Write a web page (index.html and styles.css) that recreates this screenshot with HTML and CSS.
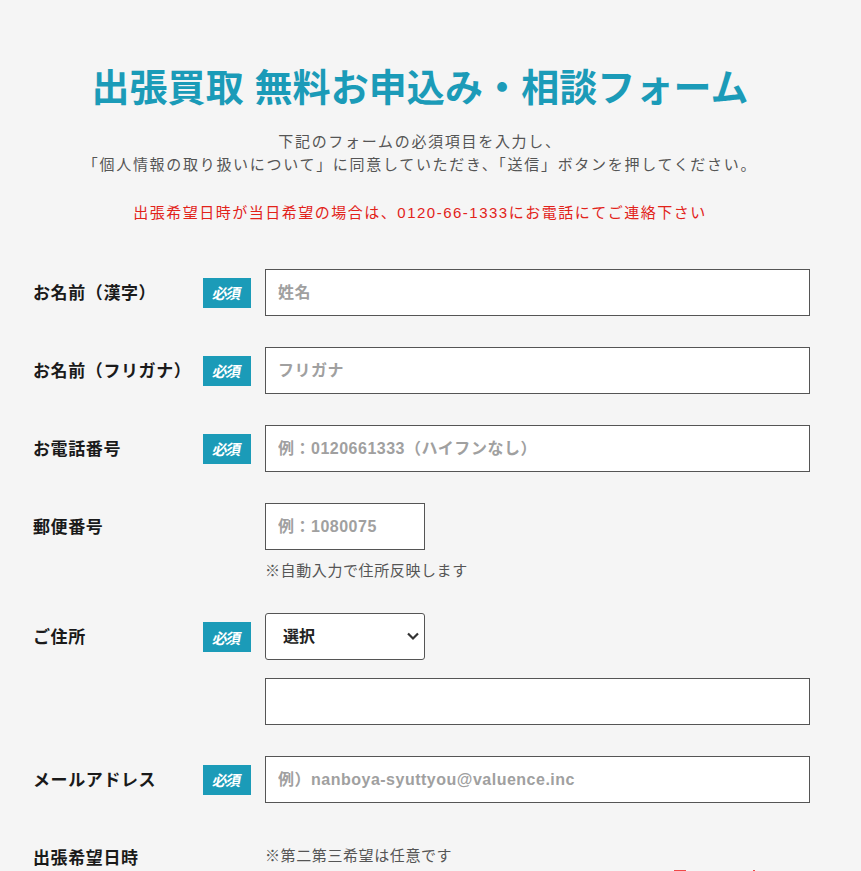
FILE: index.html
```html
<!DOCTYPE html>
<html lang="ja">
<head>
<meta charset="utf-8">
<title>出張買取 無料お申込み・相談フォーム</title>
<link rel="stylesheet" href="styles.css">
</head>
<body>
<div class="page">
  <h1 class="title">出張買取 無料お申込み・相談フォーム</h1>
  <p class="lead">下記のフォームの必須項目を入力し、<br>「個人情報の取り扱いについて」に同意していただき、「送信」ボタンを押してください。</p>
  <p class="notice">出張希望日時が当日希望の場合は、0120-66-1333にお電話にてご連絡下さい</p>

  <form class="form">
    <div class="row">
      <div class="label">お名前（漢字）</div>
      <div class="badge-col"><span class="badge"><span class="badge-text">必須</span></span></div>
      <div class="field"><input class="input" type="text" placeholder="姓名"></div>
    </div>
    <div class="row">
      <div class="label">お名前（フリガナ）</div>
      <div class="badge-col"><span class="badge"><span class="badge-text">必須</span></span></div>
      <div class="field"><input class="input" type="text" placeholder="フリガナ"></div>
    </div>
    <div class="row">
      <div class="label">お電話番号</div>
      <div class="badge-col"><span class="badge"><span class="badge-text">必須</span></span></div>
      <div class="field"><input class="input" type="text" placeholder="例：0120661333（ハイフンなし）"></div>
    </div>
    <div class="row row-top">
      <div class="label label-fixed">郵便番号</div>
      <div class="badge-col"></div>
      <div class="field">
        <input class="input input-short" type="text" placeholder="例：1080075">
        <p class="note">※自動入力で住所反映します</p>
      </div>
    </div>
    <div class="row row-top">
      <div class="label label-fixed">ご住所</div>
      <div class="badge-col badge-fixed"><span class="badge"><span class="badge-text">必須</span></span></div>
      <div class="field">
        <div class="select-wrap">
          <select class="select"><option>選択</option></select>
          <svg class="chev" width="14" height="10" viewBox="0 0 14 10"><path d="M2 2.5 L7 7.5 L12 2.5" fill="none" stroke="#333" stroke-width="2.2"/></svg>
        </div>
        <input class="input input-second" type="text">
      </div>
    </div>
    <div class="row">
      <div class="label">メールアドレス</div>
      <div class="badge-col"><span class="badge"><span class="badge-text">必須</span></span></div>
      <div class="field"><input class="input" type="text" placeholder="例）nanboya-syuttyou@valuence.inc"></div>
    </div>
    <div class="row row-top row-date">
      <div class="label">出張希望日時</div>
      <div class="badge-col"></div>
      <div class="field">
        <p class="note note-date">※第二第三希望は任意です</p>
        <div class="date-red"><span class="red-mark"></span><span class="red-mark2"></span></div>
      </div>
    </div>
  </form>
</div>
</body>
</html>
```

FILE: styles.css
```css
html, body {
  margin: 0;
  padding: 0;
  background: #f5f5f5;
}
body {
  font-family: "Liberation Sans", "Noto Sans CJK JP", sans-serif;
  color: #222;
  overflow: hidden;
}
.page {
  width: 800px;
  margin-left: 20px;
  padding-top: 64px;
}
.title {
  margin: 0;
  text-align: center;
  font-size: 38px;
  line-height: 48px;
  font-weight: 700;
  color: #1b9bb8;
  letter-spacing: 0.1px;
}
.lead {
  margin: 18px 0 0;
  text-align: center;
  font-size: 15px;
  line-height: 23px;
  color: #555;
  letter-spacing: 1.7px;
}
.notice {
  margin: 25px 0 0;
  text-align: center;
  font-size: 15px;
  line-height: 23px;
  color: #e2231a;
  letter-spacing: 1.5px;
}
.form {
  margin: 45px 10px 0 13px;
  display: flex;
  flex-direction: column;
  gap: 31px;
}
.row {
  display: flex;
  align-items: center;
}
.row-top {
  align-items: flex-start;
}
.label {
  width: 170px;
  flex: none;
  font-size: 17px;
  font-weight: 700;
  color: #1a1a1a;
  line-height: 24px;
  letter-spacing: 0.6px;
  padding-top: 3px;
}
.label-fixed {
  padding-top: 13px;
}
.badge-col {
  width: 62px;
  flex: none;
}
.badge-fixed {
  padding-top: 9px;
}
.badge {
  display: flex;
  align-items: center;
  justify-content: center;
  width: 48px;
  height: 30px;
  background: #1b9bb8;
  color: #fff;
  font-size: 15px;
  font-weight: 700;
}
.badge-text {
  display: inline-block;
  transform: skewX(-10deg);
  letter-spacing: -1.5px;
}
.field {
  flex: 1;
  display: flex;
  flex-direction: column;
}
.input {
  box-sizing: border-box;
  width: 100%;
  height: 47px;
  border: 1px solid #555;
  border-radius: 0;
  background: #fff;
  padding: 0 12px;
  font-family: inherit;
  font-size: 16px;
  font-weight: 700;
  color: #222;
  outline: none;
  letter-spacing: 0.5px;
}
.input::placeholder {
  color: #a0a0a0;
  font-weight: 700;
}
.input-short {
  width: 160px;
}
.input-second {
  margin-top: 18px;
}
.note {
  margin: 10px 0 0;
  font-size: 15px;
  line-height: 22px;
  color: #555;
  letter-spacing: 0.6px;
}
.select-wrap {
  position: relative;
  width: 160px;
  height: 47px;
}
.select {
  box-sizing: border-box;
  width: 160px;
  height: 47px;
  appearance: none;
  -webkit-appearance: none;
  border: 1px solid #555;
  border-radius: 3px;
  background: #fff;
  padding: 0 17px;
  font-family: inherit;
  font-size: 16px;
  font-weight: 700;
  color: #222;
}
.chev {
  position: absolute;
  right: 5px;
  top: 18px;
}
.row-date {
  margin-top: 11px;
}
.row-date .label {
  padding-top: 2px;
}
.note-date {
  margin-top: 0;
}
.date-red {
  position: relative;
  margin-top: 3px;
  height: 20px;
}
.red-mark {
  position: absolute;
  left: 409px;
  top: 0;
  width: 12px;
  height: 8px;
  background: #f04848;
}
.red-mark2 {
  position: absolute;
  left: 488px;
  top: 0;
  width: 2px;
  height: 8px;
  background: #f04848;
}
```
